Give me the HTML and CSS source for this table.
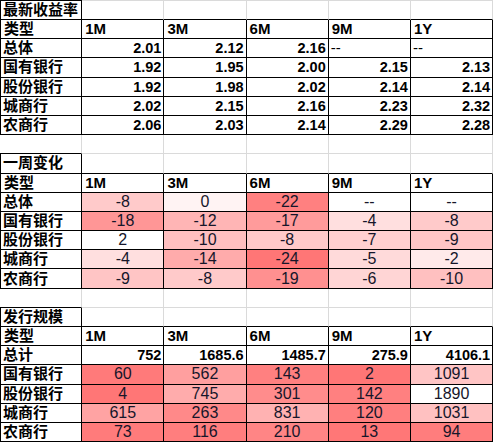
FILE: index.html
```html
<!DOCTYPE html>
<html lang="zh-CN">

<head>
  <meta charset="UTF-8">
  <meta name="viewport" content="width=device-width, initial-scale=1.0">
  <title>同业存单</title>
  <link rel="stylesheet" href="styles.css">
</head>

<body>
  <table class="sheet">
    <colgroup>
      <col><col><col><col><col><col>
    </colgroup>

    <!-- 最新收益率 -->
    <tbody class="first">
      <tr class="title-row">
        <th class="title">最新收益率</th><td></td><td></td><td></td><td></td><td></td>
      </tr>
      <tr class="box head">
        <th>类型</th><th>1M</th><th>3M</th><th>6M</th><th>9M</th><th>1Y</th>
      </tr>
      <tr class="box">
        <th>总体</th><td class="num">2.01</td><td class="num">2.12</td><td class="num">2.16</td><td class="dash">--</td><td class="dash">--</td>
      </tr>
      <tr class="box">
        <th>国有银行</th><td class="num">1.92</td><td class="num">1.95</td><td class="num">2.00</td><td class="num">2.15</td><td class="num">2.13</td>
      </tr>
      <tr class="box">
        <th>股份银行</th><td class="num">1.92</td><td class="num">1.98</td><td class="num">2.02</td><td class="num">2.14</td><td class="num">2.14</td>
      </tr>
      <tr class="box">
        <th>城商行</th><td class="num">2.02</td><td class="num">2.15</td><td class="num">2.16</td><td class="num">2.23</td><td class="num">2.32</td>
      </tr>
      <tr class="box">
        <th>农商行</th><td class="num">2.06</td><td class="num">2.03</td><td class="num">2.14</td><td class="num">2.29</td><td class="num">2.28</td>
      </tr>
      <tr class="gap">
        <td></td><td></td><td></td><td></td><td></td><td></td>
      </tr>
    </tbody>

    <!-- 一周变化 (bp) -->
    <tbody>
      <tr class="title-row">
        <th class="title">一周变化</th><td></td><td></td><td></td><td></td><td></td>
      </tr>
      <tr class="box head">
        <th>类型</th><th>1M</th><th>3M</th><th>6M</th><th>9M</th><th>1Y</th>
      </tr>
      <tr class="box">
        <th>总体</th>
        <td class="heat" style="background:#ffcaca">-8</td>
        <td class="heat" style="background:#fff3f3">0</td>
        <td class="heat" style="background:#ff8080">-22</td>
        <td class="heat">--</td>
        <td class="heat">--</td>
      </tr>
      <tr class="box">
        <th>国有银行</th>
        <td class="heat" style="background:#ff9696">-18</td>
        <td class="heat" style="background:#ffb5b5">-12</td>
        <td class="heat" style="background:#ff9b9b">-17</td>
        <td class="heat" style="background:#ffdfdf">-4</td>
        <td class="heat" style="background:#ffcaca">-8</td>
      </tr>
      <tr class="box">
        <th>股份银行</th>
        <td class="heat" style="background:#ffffff">2</td>
        <td class="heat" style="background:#ffc0c0">-10</td>
        <td class="heat" style="background:#ffcaca">-8</td>
        <td class="heat" style="background:#ffd0d0">-7</td>
        <td class="heat" style="background:#ffc5c5">-9</td>
      </tr>
      <tr class="box">
        <th>城商行</th>
        <td class="heat" style="background:#ffdfdf">-4</td>
        <td class="heat" style="background:#ffabab">-14</td>
        <td class="heat" style="background:#ff7676">-24</td>
        <td class="heat" style="background:#ffdada">-5</td>
        <td class="heat" style="background:#ffeaea">-2</td>
      </tr>
      <tr class="box">
        <th>农商行</th>
        <td class="heat" style="background:#ffc5c5">-9</td>
        <td class="heat" style="background:#ffcaca">-8</td>
        <td class="heat" style="background:#ff9090">-19</td>
        <td class="heat" style="background:#ffd5d5">-6</td>
        <td class="heat" style="background:#ffc0c0">-10</td>
      </tr>
      <tr class="gap">
        <td></td><td></td><td></td><td></td><td></td><td></td>
      </tr>
    </tbody>

    <!-- 发行规模 -->
    <tbody>
      <tr class="title-row">
        <th class="title">发行规模</th><td></td><td></td><td></td><td></td><td></td>
      </tr>
      <tr class="box head">
        <th>类型</th><th>1M</th><th>3M</th><th>6M</th><th>9M</th><th>1Y</th>
      </tr>
      <tr class="box">
        <th>总计</th><td class="num">752</td><td class="num">1685.6</td><td class="num">1485.7</td><td class="num">275.9</td><td class="num">4106.1</td>
      </tr>
      <tr class="box">
        <th>国有银行</th>
        <td class="heat" style="background:#ff7a7a">60</td>
        <td class="heat" style="background:#ff9f9f">562</td>
        <td class="heat" style="background:#ff8080">143</td>
        <td class="heat" style="background:#ff7676">2</td>
        <td class="heat" style="background:#ffc5c5">1091</td>
      </tr>
      <tr class="box">
        <th>股份银行</th>
        <td class="heat" style="background:#ff7676">4</td>
        <td class="heat" style="background:#ffacac">745</td>
        <td class="heat" style="background:#ff8c8c">301</td>
        <td class="heat" style="background:#ff8080">142</td>
        <td class="heat" style="background:#ffffff">1890</td>
      </tr>
      <tr class="box">
        <th>城商行</th>
        <td class="heat" style="background:#ffa3a3">615</td>
        <td class="heat" style="background:#ff8989">263</td>
        <td class="heat" style="background:#ffb2b2">831</td>
        <td class="heat" style="background:#ff7f7f">120</td>
        <td class="heat" style="background:#ffc1c1">1031</td>
      </tr>
      <tr class="box">
        <th>农商行</th>
        <td class="heat" style="background:#ff7b7b">73</td>
        <td class="heat" style="background:#ff7e7e">116</td>
        <td class="heat" style="background:#ff8585">210</td>
        <td class="heat" style="background:#ff7777">13</td>
        <td class="heat" style="background:#ff7d7d">94</td>
      </tr>
    </tbody>
  </table>
</body>

</html>
```

FILE: styles.css
```css
/* spreadsheet export: 6 columns, 14.4pt rows */
body {
  margin: 0;
  background: #fff;
  font-family: "Liberation Sans", "Noto Sans CJK SC", sans-serif;
  color: #000;
}

.sheet {
  border-collapse: separate;
  border-spacing: 0;
  table-layout: fixed;
  width: 493.2px;
}

.sheet col {
  width: 82.2px;
}

.sheet th,
.sheet td {
  box-sizing: border-box;
  height: 19.2px;
  padding: 0 2px;
  border-right: 1px solid #dadada;
  border-bottom: 1px solid #dadada;
  white-space: nowrap;
  overflow: hidden;
  vertical-align: middle;
  line-height: 18px;
}

/* labels */
.sheet th {
  font-size: 15px;
  font-weight: bold;
  text-align: left;
}

.head th {
  padding-left: 3px;
}

/* title rows: only the first cell is boxed */
.title-row td {
  border-bottom-color: #000;
}

.sheet .title {
  border: 1px solid #000;
  border-top: none;
}

.first .title {
  border-top: 1px solid #000;
}

.first .title-row td {
  border-top: 1px solid #dadada;
}

/* boxed rows */
.box th,
.box td {
  border-right-color: #000;
  border-bottom-color: #000;
}

.box th:first-child {
  border-left: 1px solid #000;
}

.gap td:first-child {
  border-bottom-color: #000;
}

/* values */
.num {
  font-size: 14.5px;
  font-weight: bold;
  text-align: right;
  padding-right: 1px;
}

.dash {
  font-size: 15px;
  text-align: left;
  padding-left: 3px;
}

.heat {
  font-size: 16px;
  text-align: center;
  color: #16162a;
}
```
